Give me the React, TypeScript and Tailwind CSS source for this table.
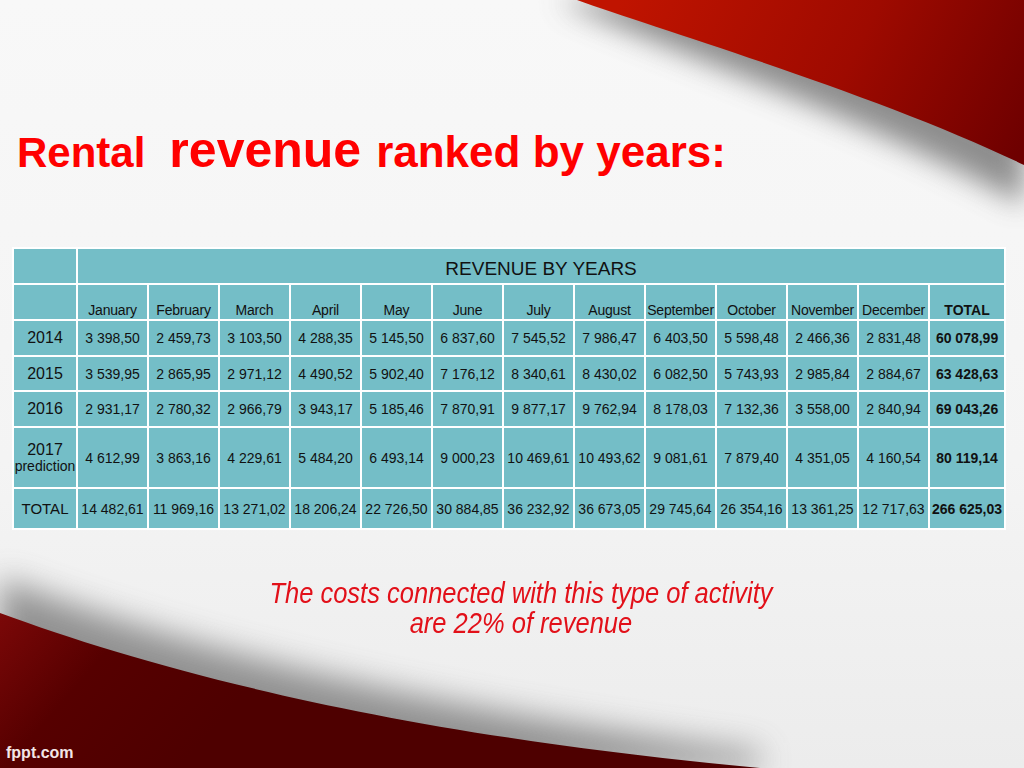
import React from "react";

const months = [
  "January","February","March","April","May","June","July","August","September","October","November","December",
];

type Row = { label: React.ReactNode; values: string[]; total: string; h: string };

const rows: Row[] = [
  { label: "2014", values: ["3 398,50","2 459,73","3 103,50","4 288,35","5 145,50","6 837,60","7 545,52","7 986,47","6 403,50","5 598,48","2 466,36","2 831,48"], total: "60 078,99", h: "h-[36px]" },
  { label: "2015", values: ["3 539,95","2 865,95","2 971,12","4 490,52","5 902,40","7 176,12","8 340,61","8 430,02","6 082,50","5 743,93","2 985,84","2 884,67"], total: "63 428,63", h: "h-[35px]" },
  { label: "2016", values: ["2 931,17","2 780,32","2 966,79","3 943,17","5 185,46","7 870,91","9 877,17","9 762,94","8 178,03","7 132,36","3 558,00","2 840,94"], total: "69 043,26", h: "h-[36px]" },
  {
    label: (
      <div className="flex flex-col items-center leading-[17px]">
        <span className="text-[16px]">2017</span>
        <span className="text-[14px]">prediction</span>
      </div>
    ),
    values: ["4 612,99","3 863,16","4 229,61","5 484,20","6 493,14","9 000,23","10 469,61","10 493,62","9 081,61","7 879,40","4 351,05","4 160,54"],
    total: "80 119,14",
    h: "h-[61px]",
  },
  { label: <span className="text-[15px]">TOTAL</span>, values: ["14 482,61","11 969,16","13 271,02","18 206,24","22 726,50","30 884,85","36 232,92","36 673,05","29 745,64","26 354,16","13 361,25","12 717,63"], total: "266 625,03", h: "h-[41px]" },
];

function Background() {
  return (
    <svg className="absolute inset-0" width="1024" height="768" viewBox="0 0 1024 768">
      <defs>
        <linearGradient id="bgg" x1="0" y1="0" x2="0" y2="768" gradientUnits="userSpaceOnUse">
          <stop offset="0" stopColor="#f8f8f8" />
          <stop offset="0.6" stopColor="#f4f4f4" />
          <stop offset="1" stopColor="#ececec" />
        </linearGradient>
        <linearGradient id="red1" x1="620" y1="0" x2="1000" y2="190" gradientUnits="userSpaceOnUse">
          <stop offset="0" stopColor="#c01400" />
          <stop offset="0.55" stopColor="#9e0a00" />
          <stop offset="1" stopColor="#6e0000" />
        </linearGradient>
        <linearGradient id="red2" x1="0" y1="610" x2="180" y2="768" gradientUnits="userSpaceOnUse">
          <stop offset="0" stopColor="#7c0808" />
          <stop offset="0.45" stopColor="#560000" />
          <stop offset="1" stopColor="#4e0000" />
        </linearGradient>
        <filter id="blur1" x="-30%" y="-60%" width="160%" height="220%">
          <feGaussianBlur stdDeviation="14" />
        </filter>
        <filter id="blur2" x="-30%" y="-60%" width="160%" height="220%">
          <feGaussianBlur stdDeviation="16" />
        </filter>
      </defs>
      <rect x="0" y="0" width="1024" height="768" fill="url(#bgg)" />
      <path
        d="M557,0 C640,40 860,115 1024,205 L1024,0 Z"
        fill="#6a6a6a"
        opacity="0.75"
        filter="url(#blur1)"
      />
      <path d="M577,0 C660,30 880,95 1024,165 L1024,0 Z" fill="url(#red1)" />
      <path
        d="M0,578 C160,640 400,705 760,752 L760,768 L0,768 Z"
        fill="#6a6a6a"
        opacity="0.7"
        filter="url(#blur2)"
      />
      <path d="M0,613 C160,672 400,735 760,768 L0,768 Z" fill="url(#red2)" />
    </svg>
  );
}

export default function App() {
  const cell = "border-2 border-white text-center p-0 whitespace-nowrap";
  return (
    <div
      className="relative w-[1024px] h-[768px] overflow-hidden bg-[#f6f6f6]"
      style={{ fontFamily: '"Liberation Sans", Arial, sans-serif' }}
    >
      <Background />
      <div className="relative flex flex-col">
        <div className="mt-[122px] h-[59px] pl-[17px] text-[42px] leading-[56px] font-bold text-[#ff0000] whitespace-nowrap">
          <span>Rental</span>
          <span className="ml-[24px] text-[50px]">revenue</span>
          <span className="ml-[15px] text-[44px]">ranked by years:</span>
        </div>

        <div className="mt-[66px] pl-[12px]">
          <table className="table-fixed border-collapse w-[992px] bg-[#74bec7] text-[#111] text-[14px] leading-[16px]">
            <colgroup>
              <col className="w-[64px]" />
              {months.map((m) => (
                <col key={m} className="w-[71px]" />
              ))}
              <col className="w-[76px]" />
            </colgroup>
            <tbody>
              <tr className="h-[36px]">
                <td className={cell}></td>
                <td colSpan={13} className={`${cell} align-bottom pb-[4px] text-[19px] leading-[20px]`}>
                  REVENUE BY YEARS
                </td>
              </tr>
              <tr className="h-[36px]">
                <td className={cell}></td>
                {months.map((m) => (
                  <td key={m} className={`${cell} align-bottom pb-[1px] tracking-[-0.2px]`}>
                    {m}
                  </td>
                ))}
                <td className={`${cell} align-bottom pb-[1px] font-bold`}>TOTAL</td>
              </tr>
              {rows.map((r, i) => (
                <tr key={i} className={r.h}>
                  <td className={`${cell} align-middle text-[16px]`}>{r.label}</td>
                  {r.values.map((v, j) => (
                    <td key={j} className={`${cell} align-middle`}>
                      {v}
                    </td>
                  ))}
                  <td className={`${cell} align-middle font-bold`}>{r.total}</td>
                </tr>
              ))}
            </tbody>
          </table>
        </div>

        <div className="mt-[48px] flex flex-col items-center text-[30px] leading-[30px] italic text-[#e21019] pl-[18px]">
          <span className="scale-x-[0.85]">The costs connected with this type of activity</span>
          <span className="scale-x-[0.85]">are 22% of revenue</span>
        </div>
      </div>

      <div className="absolute left-[6px] top-[745px] text-[16px] leading-[16px] font-bold text-[#f3e6e6]">
        fppt.com
      </div>
    </div>
  );
}
